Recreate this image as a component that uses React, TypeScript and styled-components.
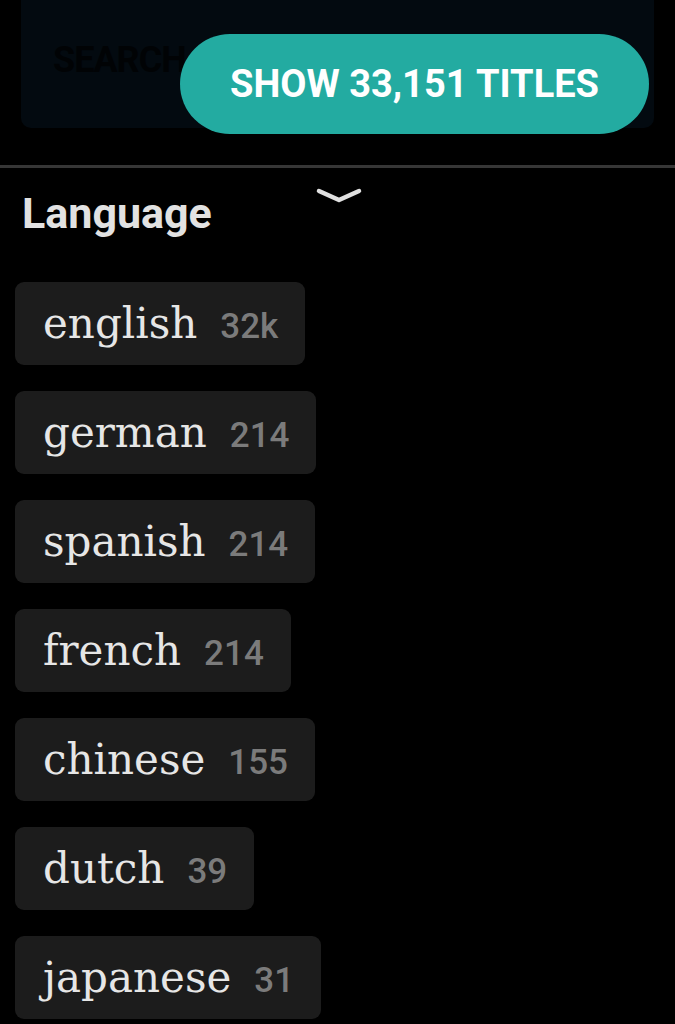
import React from 'react';
import styled, { createGlobalStyle } from 'styled-components';

const GlobalStyle = createGlobalStyle`
  html, body {
    margin: 0;
    padding: 0;
    background: #000;
  }
  body {
    font-family: Roboto, "Liberation Sans", sans-serif;
    overflow: hidden;
  }
`;

const Page = styled.div`
  width: 675px;
  height: 1024px;
  background: #000;
  overflow: hidden;
`;

const TopArea = styled.div`
  position: relative;
  padding: 0 21px;
`;

const SearchPanel = styled.div`
  height: 128px;
  box-sizing: border-box;
  padding: 42px 32px 0;
  background: #030a10;
  border-radius: 0 0 10px 10px;
`;

const SearchLabel = styled.div`
  font-family: Roboto, "Liberation Sans", sans-serif;
  font-weight: 700;
  font-size: 36px;
  line-height: 1;
  letter-spacing: -1px;
  color: #010305;
`;

const ShowButton = styled.button`
  position: absolute;
  top: 34px;
  right: 26px;
  width: 469px;
  height: 100px;
  border: none;
  border-radius: 50px;
  background: #23aba1;
  color: #fff;
  font-family: Roboto, "Liberation Sans", sans-serif;
  font-weight: 700;
  font-size: 38px;
  padding: 0;
  cursor: pointer;
`;

const Divider = styled.div`
  margin-top: 37px;
  height: 3px;
  background: #363636;
`;

const Section = styled.section`
  position: relative;
  padding: 24px 0 0 15px;
`;

const Handle = styled.svg`
  position: absolute;
  top: 20px;
  left: 316px;
`;

const Heading = styled.h2`
  margin: 0 0 47px 7px;
  font-family: Roboto, "Liberation Sans", sans-serif;
  font-weight: 700;
  font-size: 43px;
  line-height: 1;
  color: #e2e2e2;
`;

const ChipList = styled.div`
  display: flex;
  flex-direction: column;
  align-items: flex-start;
  gap: 26px;
`;

const Chip = styled.div`
  display: flex;
  align-items: baseline;
  height: 83px;
  box-sizing: border-box;
  padding: 0 27px 0 28px;
  line-height: 83px;
  background: #1c1c1c;
  border-radius: 9px;
`;

const ChipName = styled.span`
  font-family: "DejaVu Serif", serif;
  font-size: 42px;
  color: #e6e6e6;
`;

const ChipCount = styled.span`
  margin-left: 23px;
  font-family: Roboto, "Liberation Sans", sans-serif;
  font-weight: 500;
  font-size: 35px;
  color: #7b7b7b;
`;

const languages = [
  { name: 'english', count: '32k' },
  { name: 'german', count: '214' },
  { name: 'spanish', count: '214' },
  { name: 'french', count: '214' },
  { name: 'chinese', count: '155' },
  { name: 'dutch', count: '39' },
  { name: 'japanese', count: '31' },
];

const App: React.FC = () => {
  return (
    <Page>
      <GlobalStyle />
      <TopArea>
        <SearchPanel>
          <SearchLabel>SEARCH</SearchLabel>
        </SearchPanel>
        <ShowButton>SHOW 33,151 TITLES</ShowButton>
      </TopArea>
      <Divider />
      <Section>
        <Handle width="46" height="18" viewBox="0 0 46 18">
          <path d="M3 3 L23 12 L43 3" fill="none" stroke="#e0e0e0" strokeWidth="4.5" strokeLinecap="round" strokeLinejoin="round" />
        </Handle>
        <Heading>Language</Heading>
        <ChipList>
          {languages.map((l) => (
            <Chip key={l.name}>
              <ChipName>{l.name}</ChipName>
              <ChipCount>{l.count}</ChipCount>
            </Chip>
          ))}
        </ChipList>
      </Section>
    </Page>
  );
};

export default App;
